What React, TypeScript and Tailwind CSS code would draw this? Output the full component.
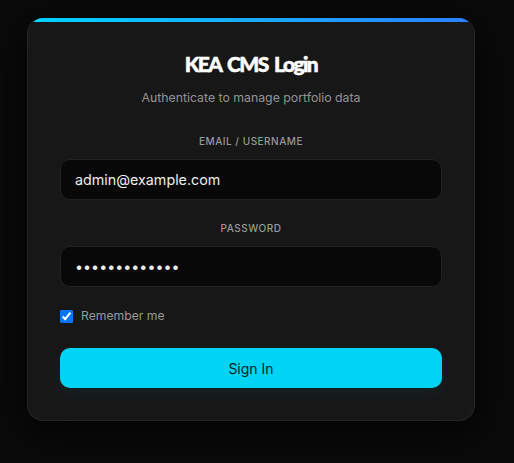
export default function App() {
	return (
		<div className="h-[463px] w-[514px] overflow-hidden bg-[#0a0a0a] pt-[18px] pl-[27px] font-['Inter',sans-serif]">
			<div className="relative h-[403px] w-[448px] overflow-hidden rounded-2xl border border-t-0 border-[#262626] bg-[#171717] shadow-[0_10px_40px_rgba(0,0,0,0.8)] px-8 pt-[31px]">
				<div className="absolute top-0 right-0 left-0 h-[4px] bg-gradient-to-r from-[#00d4ff] to-[#2a7fff]" />
				<h1 className="text-center font-['Lato',sans-serif] text-[21px] leading-[30px] font-black tracking-[-1.6px] text-white [word-spacing:3px] [-webkit-text-stroke:0.5px_white]">
					KEA CMS Login
				</h1>
				<p className="mt-[9px] text-center text-[12.3px] leading-[20px] text-[#949494]">
					Authenticate to manage portfolio data
				</p>
				<form>
					<label className="mt-[25px] block text-center text-[10px] leading-[16px] font-medium tracking-[0.5px] text-[#999999] uppercase">
						Email / Username
					</label>
					<input
						className="mt-[10px] block h-[41px] w-full rounded-[10px] border border-[#222222] bg-[#080808] px-[14px] text-[14.3px] text-[#ededed] outline-none"
						defaultValue="admin@example.com"
						type="text"
					/>
					<label className="mt-[20px] block text-center text-[10px] leading-[16px] font-medium tracking-[0.5px] text-[#999999] uppercase">
						Password
					</label>
					<input
						className="mt-[10px] block h-[41px] w-full rounded-[10px] border border-[#222222] bg-[#080808] px-[14px] text-[14.3px] text-[#ededed] outline-none"
						defaultValue="password12345"
						type="password"
					/>
					<label className="mt-[19px] flex h-[20px] items-center gap-2 text-[12.2px] text-[#999999]">
						<input className="m-0 h-[13px] w-[13px]" defaultChecked type="checkbox" />
						Remember me
					</label>
					<button
						className="mt-[22px] block h-[40px] w-full rounded-[10px] bg-[#00d4f5] text-[14px] text-[#0a1a20] shadow-[0_6px_16px_rgba(0,212,255,0.06)]"
						type="button"
					>
						Sign In
					</button>
				</form>
			</div>
		</div>
	);
}
